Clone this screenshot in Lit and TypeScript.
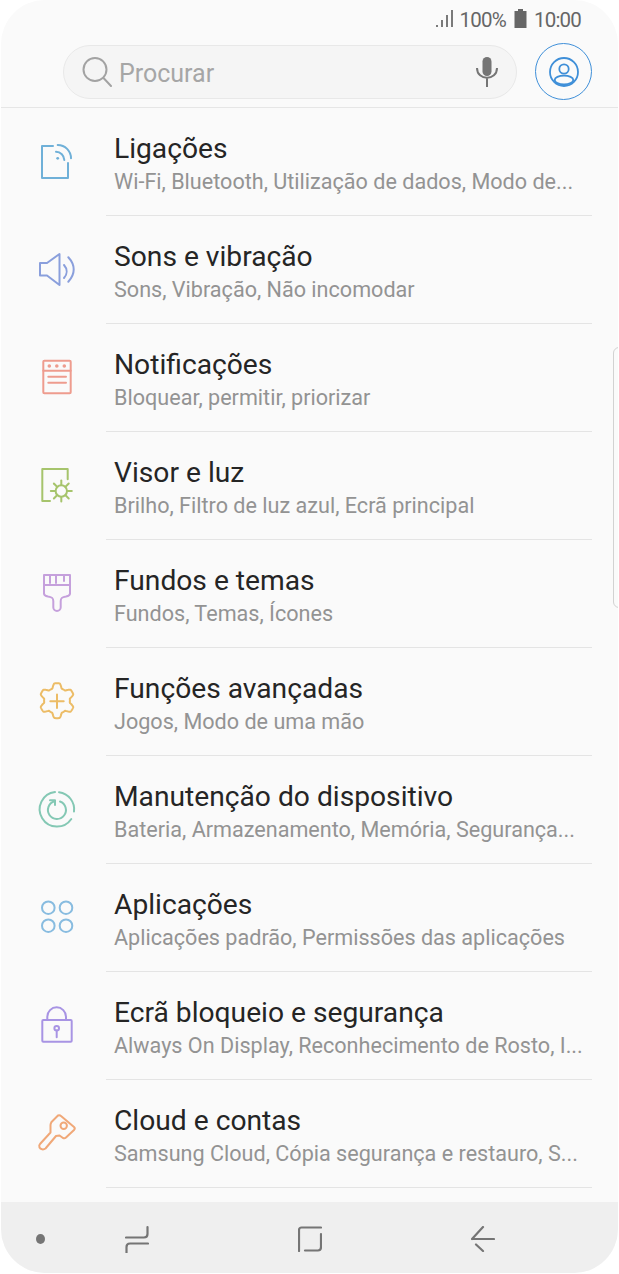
import { LitElement, html, css, svg } from "lit";
import { customElement } from "lit/decorators.js";

const gearPath = () => {
  const pts: string[] = [];
  for (let i = 0; i < 180; i++) {
    const t = (i / 180) * Math.PI * 2;
    const k = Math.max(-1, Math.min(1, 1.7 * Math.cos(6 * t)));
    const r = 15.2 + 2.3 * k;
    pts.push(`${(24 + r * Math.sin(t)).toFixed(2)} ${(22.7 - r * Math.cos(t)).toFixed(2)}`);
  }
  return "M" + pts.join("L") + "Z";
};

const sunRays = () => {
  const out = [];
  for (let i = 0; i < 8; i++) {
    const t = (i / 8) * Math.PI * 2;
    out.push(svg`<line x1=${28.3 + 6 * Math.cos(t)} y1=${29 + 6 * Math.sin(t)} x2=${28.3 + 10.5 * Math.cos(t)} y2=${29 + 10.5 * Math.sin(t)}></line>`);
  }
  return out;
};

const icons = [
  { c: "#6fb0d8", s: svg`<path d="M20 8H9V40H35V25"/><path d="M23 13.7A8.5 8.5 0 0 1 31.3 22"/><path d="M24.7 7A13.3 13.3 0 0 1 38 20.3"/><circle cx="24.7" cy="20.3" r="1.4" fill="currentColor" stroke="none"/>` },
  { c: "#8a9fdc", s: svg`<path d="M7 17H14L26.500 8V39L14 29.500H7Z"/><path d="M31 19C34.500 23 34.500 28 31 32"/><path d="M35.300 11.300C42.500 19 42.500 28 35.300 35.700"/>` },
  { c: "#ee9c8e", s: svg`<rect x="10.3" y="6.7" width="27.4" height="32.6" rx="1"/><path d="M10.3 16.7H37.7M15.3 22.7H33M15.3 28.7H33"/><g fill="currentColor" stroke="none"><circle cx="16.3" cy="12" r="1.8"/><circle cx="23.8" cy="12" r="1.8"/><circle cx="31.3" cy="12" r="1.8"/></g>` },
  { c: "#a6c46c", s: svg`<path d="M34.7 17.3V7H9.3V39H17"/><circle cx="28.3" cy="29" r="5.7"/>${sunRays()}` },
  { c: "#c5a0dc", s: svg`<path d="M11 5H37V23.5C37 25.5 36 26 33 26.5C29 27 27.7 28 27.7 31V37.3A3.7 3.7 0 0 1 20.3 37.3V31C20.3 28 19 27 15 26.5C12 26 11 25.500 11 23.500Z"/><path d="M11 15H37M17 5V13M23 5V13M31 5V11"/>` },
  { c: "#ecbc66", s: svg`<path d=${gearPath()}/><path d="M24 16.500V30M17.300 23.300H30.700"/>` },
  { c: "#84c8b4", s: svg`<path d="M26 6.200A17.300 17.300 0 0 1 41 25.500"/><path d="M38.300 33A17.300 17.300 0 1 1 22 6.100"/><path d="M27 15.500A9 9 0 1 1 21.500 15.300"/><path d="M17 14.300H22V19"/>` },
  { c: "#88bce0", s: svg`<circle cx="15.3" cy="13.7" r="6.3"/><circle cx="33" cy="13.7" r="6.3"/><circle cx="15.3" cy="31.7" r="6.3"/><circle cx="33" cy="31.7" r="6.3"/>` },
  { c: "#a894e4", s: svg`<rect x="9.3" y="18" width="29.4" height="21.7" rx="1"/><path d="M14.3 18V14.7A9.35 9.35 0 0 1 33 14.7V18"/><circle cx="23.7" cy="26.3" r="2.3"/><path d="M23.7 28.6V35.3"/>` },
  { c: "#f0a878", s: svg`<path d="M25 5.500C26 5 27 5 28 6L41 17C42 18 42 19 41 20L33 27.500C32 28.500 31 28.500 30 28L26.500 25.500L23 26L12.500 38.500C10.500 40 7.500 39.500 6.500 37.500C6 36 6 35 7 34L17.500 22.500L17.500 15C17.500 14 18 13 18.500 12Z"/><circle cx="30.700" cy="15.700" r="3.200"/>` },
];

const rows = [
  ["Ligações", "Wi-Fi, Bluetooth, Utilização de dados, Modo de..."],
  ["Sons e vibração", "Sons, Vibração, Não incomodar"],
  ["Notificações", "Bloquear, permitir, priorizar"],
  ["Visor e luz", "Brilho, Filtro de luz azul, Ecrã principal"],
  ["Fundos e temas", "Fundos, Temas, Ícones"],
  ["Funções avançadas", "Jogos, Modo de uma mão"],
  ["Manutenção do dispositivo", "Bateria, Armazenamento, Memória, Segurança..."],
  ["Aplicações", "Aplicações padrão, Permissões das aplicações"],
  ["Ecrã bloqueio e segurança", "Always On Display, Reconhecimento de Rosto, I..."],
  ["Cloud e contas", "Samsung Cloud, Cópia segurança e restauro, S..."],
];

@customElement("app-root")
export class AppRoot extends LitElement {
  static styles = css`
    :host { display: block; width: 619px; height: 1274px; background: #fff; overflow: hidden; font-family: Roboto, "Liberation Sans", sans-serif; }
    .screen { position: relative; height: 1273px; margin: 0 1px; background: #fafafa; border-radius: 44px; overflow: hidden; display: flex; flex-direction: column; }
    .status { height: 37px; flex: none; box-sizing: border-box; padding: 8px 37px 0 0; display: flex; justify-content: flex-end; align-items: flex-start; color: #666; font-size: 20.5px; letter-spacing: -0.8px; line-height: 24px; }
    .status svg { display: block; flex: none; margin-top: 1px; }
    .pct { margin: 0 8px 0 6px; }
    .time { margin-left: 7px; }
    .header { height: 71px; flex: none; box-sizing: border-box; padding: 6px 26px 0 62px; display: flex; align-items: flex-start; gap: 18px; border-bottom: 1px solid #e6e6e6; }
    .search { width: 454px; height: 54px; box-sizing: border-box; margin-top: 2px; border: 1px solid #e8e8e8; border-radius: 27px; background: #f5f5f5; display: flex; align-items: center; padding: 0 18px; color: #a6a6a6; font-size: 25px; }
    .search span { flex: 1; margin: 2px 0 0 7px; }
    .search svg { display: block; flex: none; }
    .avatar { width: 57px; height: 57px; flex: none; box-sizing: border-box; border: 1.3px solid #3f8fd8; border-radius: 50%; display: flex; align-items: center; justify-content: center; }
    .list { flex: 1; overflow: hidden; }
    .row { height: 108px; box-sizing: border-box; display: flex; }
    .icon { width: 105px; flex: none; display: flex; padding: 30px 0 0 32px; box-sizing: border-box; }
    .icon svg { width: 48px; height: 48px; display: block; fill: none; stroke: currentColor; stroke-width: 2; stroke-linecap: round; stroke-linejoin: round; }
    .body { flex: none; width: 486px; box-sizing: border-box; padding: 23px 0 0 8px; border-bottom: 1px solid #e4e4e4; }
    .title { font-size: 28.2px; line-height: 35px; margin-bottom: 1px; color: #252525; white-space: nowrap; }
    .sub { font-size: 21.6px; line-height: 30px; color: #939393; white-space: nowrap; }
    .nav { height: 71px; flex: none; box-sizing: border-box; background: #efefef; display: flex; align-items: center; padding: 2px 0 0 35px; }
    .nav svg { display: block; flex: none; fill: none; stroke: #757575; stroke-width: 2.2; stroke-linecap: round; }
    .dot { width: 9px; height: 10px; border-radius: 50%; background: #757575; margin-right: 80px; flex: none; }
    .nav svg + svg { margin-left: 149px; }
    .scroll { position: absolute; left: 612px; top: 347px; width: 12px; height: 261px; box-sizing: border-box; border: 1.5px solid #d2d2d2; border-radius: 8px; background: #fafafa; }
  `;
  render() {
    return html`<div class="screen">
      <div class="status">
        <svg width="18" height="20" viewBox="0 0 18 20"><g fill="#7a7a7a"><rect x="0" y="16" width="2" height="2"/><rect x="5" y="11" width="2" height="7"/><rect x="10" y="6" width="2" height="12"/><rect x="15" y="1" width="2" height="17"/></g></svg>
        <span class="pct">100%</span>
        <svg width="13" height="20" viewBox="0 0 13 20"><path d="M4 0H9V2H12.500V19H.5V2H4Z" fill="#666"/></svg>
        <span class="time">10:00</span>
      </div>
      <div class="header">
        <div class="search">
          <svg width="30" height="30" viewBox="0 0 30 30" fill="none" stroke="#a3a3a3" stroke-width="2"><circle cx="13" cy="12.500" r="11.500"/><path d="M21.500 21L29 29" stroke-linecap="round"/></svg>
          <span>Procurar</span>
          <svg width="22" height="30" viewBox="0 0 22 30" fill="none" stroke="#757575" stroke-width="2"><rect x="6.500" y="0" width="9" height="19" rx="4.500" fill="#757575" stroke="none"/><path d="M1 11C1 24 21 24 21 11M11 20V30"/></svg>
        </div>
        <div class="avatar">
          <svg width="32" height="32" viewBox="0 0 32 32" fill="none" stroke="#3f8fd8" stroke-width="1.8"><circle cx="16" cy="16" r="14"/><circle cx="16" cy="13" r="4.700"/><ellipse cx="16" cy="24" rx="9.300" ry="4.400"/></svg>
        </div>
      </div>
      <div class="list">
        ${rows.map(([t, s], i) => html`<div class="row">
          <div class="icon" style="color:${icons[i].c}"><svg viewBox="0 0 48 48">${icons[i].s}</svg></div>
          <div class="body"><div class="title">${t}</div><div class="sub">${s}</div></div>
        </div>`)}
      </div>
      <div class="nav">
        <div class="dot"></div>
        <svg width="24" height="28" viewBox="0 0 24 28"><path d="M1 12.500H19C21.500 12.500 22.500 11.500 22.500 9V2M23 18.500H5C2.500 18.500 1.500 19.500 1.500 22V28"/></svg>
        <svg width="24" height="26" viewBox="0 0 24 26"><path d="M1 25V4C1 2.500 2 1.500 3.500 1.500H23M23 8V21C23 23.500 22 24.500 20 24.500H7"/></svg>
        <svg width="24" height="26" viewBox="0 0 24 26"><path d="M1 13H23M12 1L1 13M5 18.500L12 25"/></svg>
      </div>
      <div class="scroll"></div>
    </div>`;
  }
}
